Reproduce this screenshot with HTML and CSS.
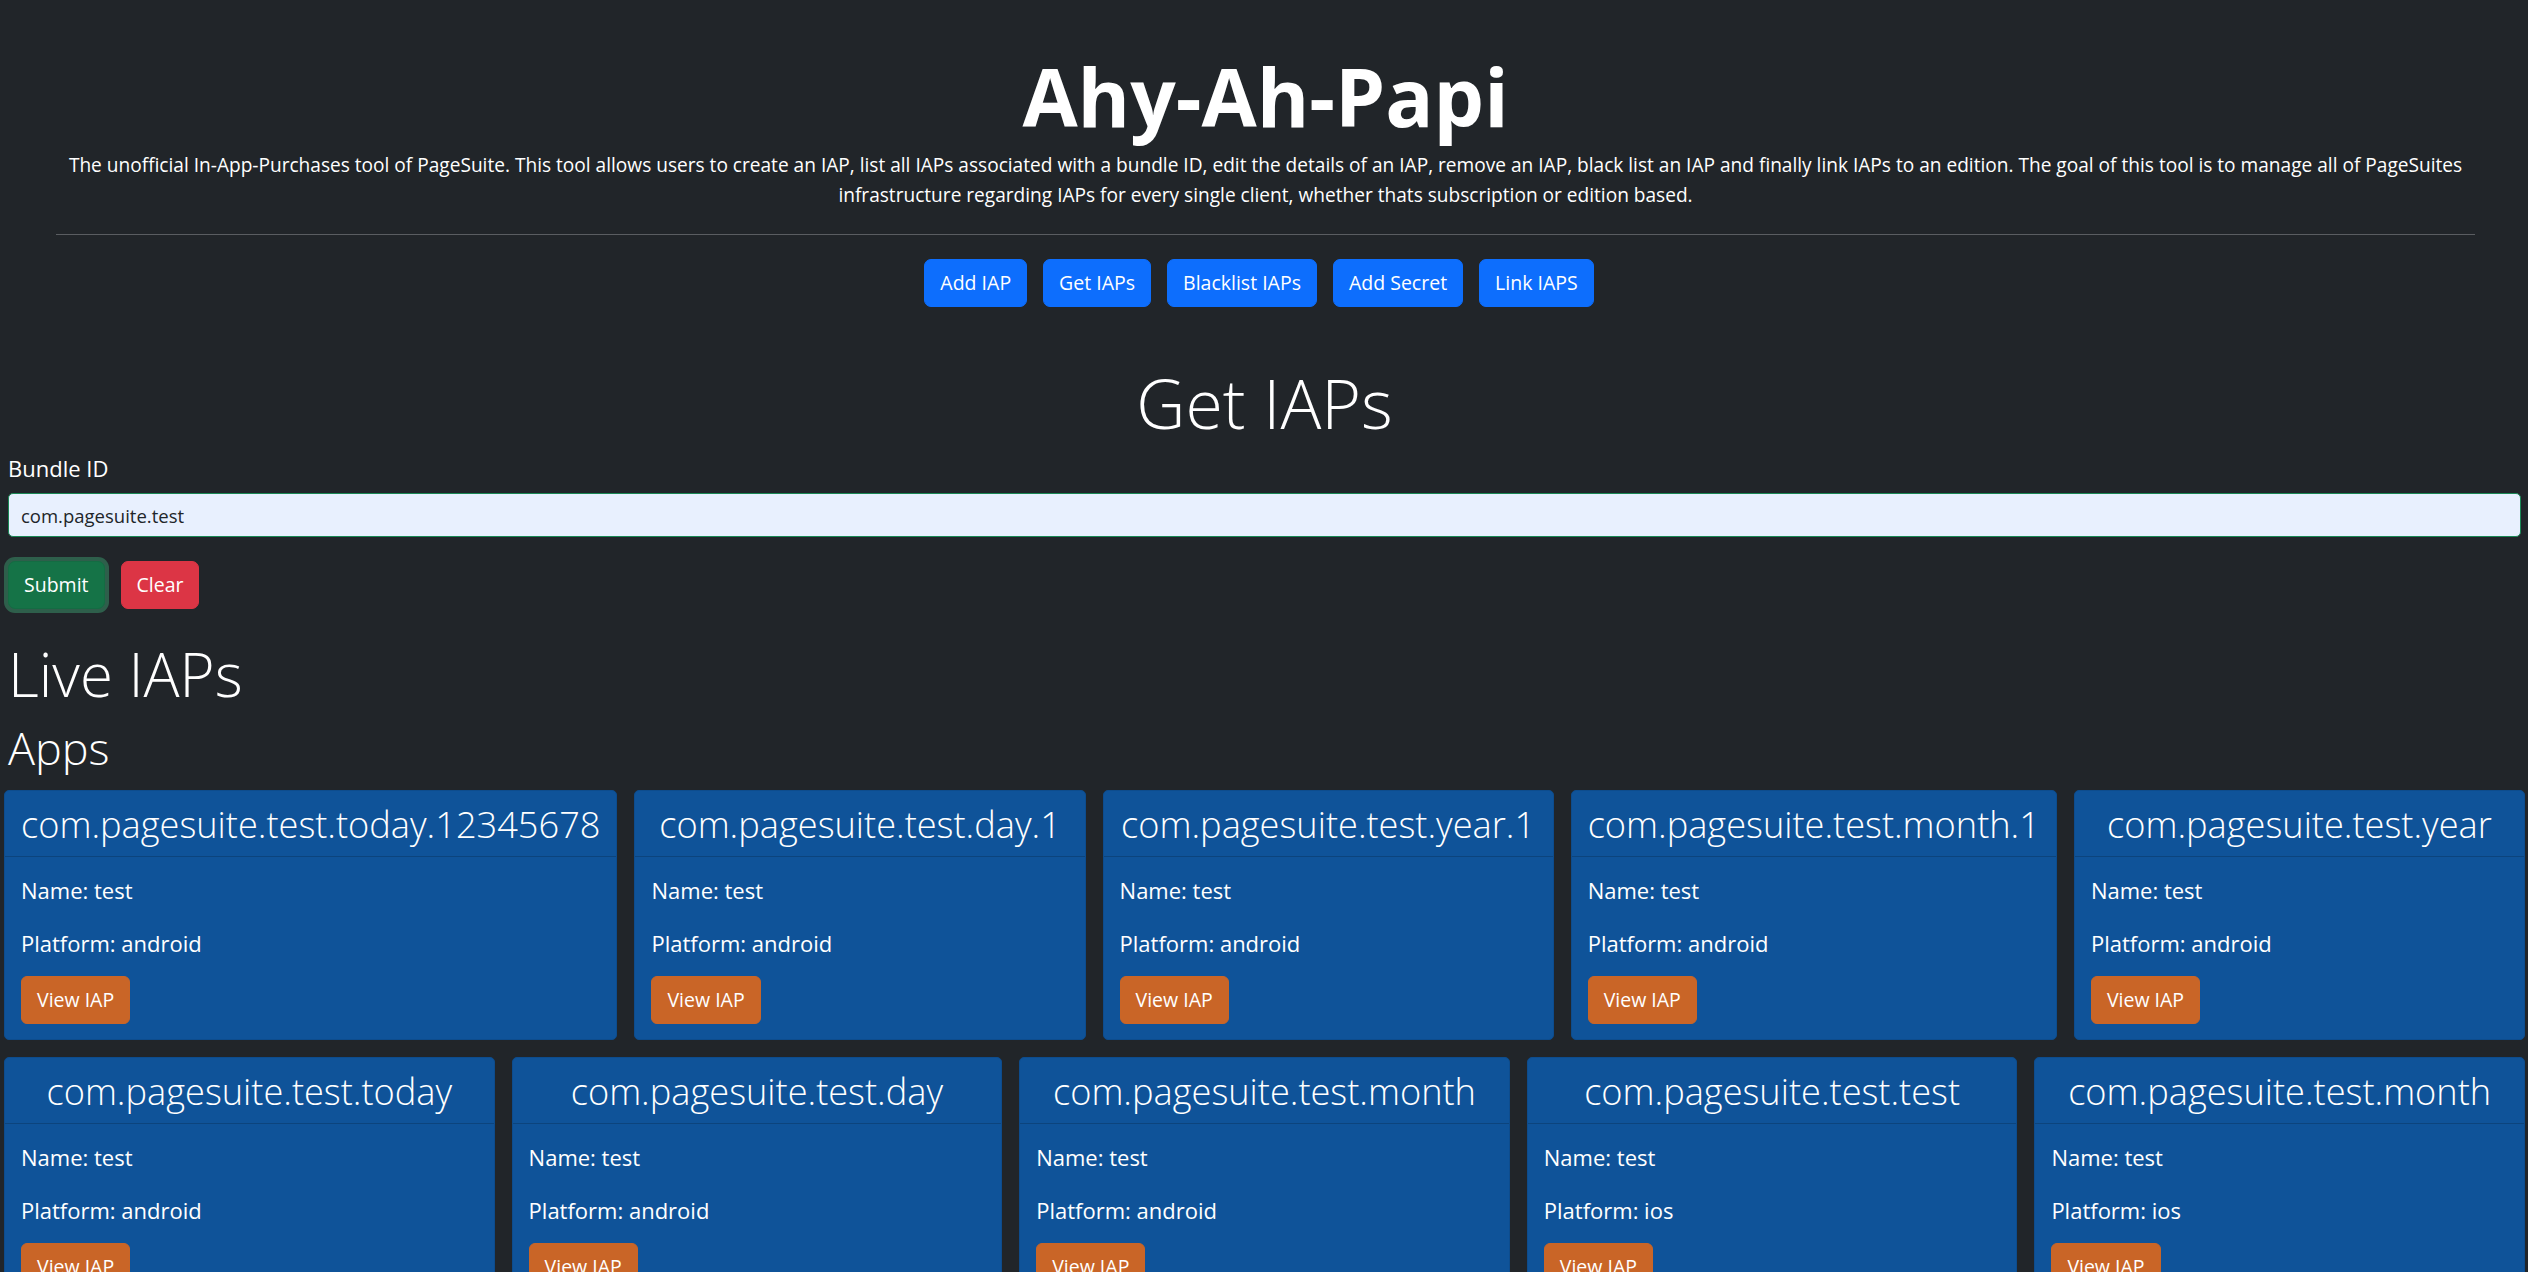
FILE: index.html
```html
<!DOCTYPE html>
<html lang="en">
<head>
<meta charset="utf-8">
<title>Ahy-Ah-Papi</title>
<link rel="stylesheet" href="styles.css">
</head>
<body>
<header class="hero">
  <h1 class="hero-title">Ahy-Ah-Papi</h1>
  <p class="hero-lead">The unofficial In-App-Purchases tool of PageSuite. This tool allows users to create an IAP, list all IAPs associated with a bundle ID, edit the details of an IAP, remove an IAP, black list an IAP and finally link IAPs to an edition. The goal of this tool is to manage all of PageSuites infrastructure regarding IAPs for every single client, whether thats subscription or edition based.</p>
  <hr class="hero-rule">
  <nav class="hero-nav">
    <button class="btn btn-primary" type="button">Add IAP</button>
    <button class="btn btn-primary" type="button">Get IAPs</button>
    <button class="btn btn-primary" type="button">Blacklist IAPs</button>
    <button class="btn btn-primary" type="button">Add Secret</button>
    <button class="btn btn-primary" type="button">Link IAPS</button>
  </nav>
</header>
<main class="page">
  <h2 class="section-title">Get IAPs</h2>
  <form class="bundle-form">
    <label class="form-label" for="bundle">Bundle ID</label>
    <input class="form-input" id="bundle" type="text" value="com.pagesuite.test">
    <div class="form-actions">
      <button class="btn btn-success is-focused" type="button">Submit</button>
      <button class="btn btn-danger" type="button">Clear</button>
    </div>
  </form>
  <h2 class="live-title">Live IAPs</h2>
  <h3 class="apps-title">Apps</h3>
  <div class="card-grid">
    <article class="iap-card">
      <div class="iap-card-header">com.pagesuite.test.today.12345678</div>
      <div class="iap-card-body">
        <p class="iap-line">Name: test</p>
        <p class="iap-line iap-line-last">Platform: android</p>
        <button class="btn btn-view" type="button">View IAP</button>
      </div>
    </article>
    <article class="iap-card">
      <div class="iap-card-header">com.pagesuite.test.day.1</div>
      <div class="iap-card-body">
        <p class="iap-line">Name: test</p>
        <p class="iap-line iap-line-last">Platform: android</p>
        <button class="btn btn-view" type="button">View IAP</button>
      </div>
    </article>
    <article class="iap-card">
      <div class="iap-card-header">com.pagesuite.test.year.1</div>
      <div class="iap-card-body">
        <p class="iap-line">Name: test</p>
        <p class="iap-line iap-line-last">Platform: android</p>
        <button class="btn btn-view" type="button">View IAP</button>
      </div>
    </article>
    <article class="iap-card">
      <div class="iap-card-header">com.pagesuite.test.month.1</div>
      <div class="iap-card-body">
        <p class="iap-line">Name: test</p>
        <p class="iap-line iap-line-last">Platform: android</p>
        <button class="btn btn-view" type="button">View IAP</button>
      </div>
    </article>
    <article class="iap-card">
      <div class="iap-card-header">com.pagesuite.test.year</div>
      <div class="iap-card-body">
        <p class="iap-line">Name: test</p>
        <p class="iap-line iap-line-last">Platform: android</p>
        <button class="btn btn-view" type="button">View IAP</button>
      </div>
    </article>
    <article class="iap-card">
      <div class="iap-card-header">com.pagesuite.test.today</div>
      <div class="iap-card-body">
        <p class="iap-line">Name: test</p>
        <p class="iap-line iap-line-last">Platform: android</p>
        <button class="btn btn-view" type="button">View IAP</button>
      </div>
    </article>
    <article class="iap-card">
      <div class="iap-card-header">com.pagesuite.test.day</div>
      <div class="iap-card-body">
        <p class="iap-line">Name: test</p>
        <p class="iap-line iap-line-last">Platform: android</p>
        <button class="btn btn-view" type="button">View IAP</button>
      </div>
    </article>
    <article class="iap-card">
      <div class="iap-card-header">com.pagesuite.test.month</div>
      <div class="iap-card-body">
        <p class="iap-line">Name: test</p>
        <p class="iap-line iap-line-last">Platform: android</p>
        <button class="btn btn-view" type="button">View IAP</button>
      </div>
    </article>
    <article class="iap-card">
      <div class="iap-card-header">com.pagesuite.test.test</div>
      <div class="iap-card-body">
        <p class="iap-line">Name: test</p>
        <p class="iap-line iap-line-last">Platform: ios</p>
        <button class="btn btn-view" type="button">View IAP</button>
      </div>
    </article>
    <article class="iap-card">
      <div class="iap-card-header">com.pagesuite.test.month</div>
      <div class="iap-card-body">
        <p class="iap-line">Name: test</p>
        <p class="iap-line iap-line-last">Platform: ios</p>
        <button class="btn btn-view" type="button">View IAP</button>
      </div>
    </article>
  </div>
</main>
</body>
</html>
```

FILE: styles.css
```css
* {
  box-sizing: border-box;
}

html {
  scrollbar-width: none;
}

html::-webkit-scrollbar {
  display: none;
}

body {
  margin: 0;
  background: #212529;
  color: #ffffff;
  font-family: "Open Sans", "Noto Sans", "DejaVu Sans", sans-serif;
}

/* ---------- header ---------- */
.hero {
  padding: 48px 53px 0 56px;
  text-align: center;
}

.hero-title {
  margin: 0;
  font-size: 80px;
  font-weight: 700;
  line-height: 96px;
}

.hero-lead {
  margin: 6px 0 0;
  font-size: 19.1px;
  line-height: 30px;
}

.hero-rule {
  margin: 24px 0 0;
  height: 0;
  border: 0;
  border-top: 1px solid #5a5d61;
}

.hero-nav {
  display: flex;
  justify-content: center;
  gap: 16px;
  padding-right: 13px;
  margin-top: 24px;
}

/* ---------- buttons ---------- */
.btn {
  font-family: inherit;
  font-size: 19.5px;
  line-height: 30px;
  padding: 8px 15px;
  border: 1px solid transparent;
  border-radius: 7px;
  color: #ffffff;
  cursor: pointer;
}

.btn-primary {
  background: #0d6efd;
  border-color: #0d6efd;
}

.btn-success {
  background: #157347;
  border-color: #146c43;
}

.btn-success.is-focused {
  box-shadow: 0 0 0 4px rgba(60, 153, 110, 0.5);
}

.btn-danger {
  background: #dc3545;
  border-color: #dc3545;
}

.btn-view {
  background: #c96527;
  border-color: #c96527;
  border-radius: 6px;
}

/* ---------- page ---------- */
.page {
  padding: 0 7px 0 8px;
}

.section-title {
  margin: 55px 0 0;
  text-align: center;
  font-size: 68px;
  font-weight: 300;
  line-height: 82px;
}

.bundle-form {
  display: flex;
  flex-direction: column;
  align-items: flex-start;
  margin-top: 8px;
}

.form-label {
  display: block;
  font-size: 22px;
  line-height: 33px;
}

.form-input {
  display: block;
  width: 100%;
  height: 44px;
  margin-top: 8px;
  padding: 0 12px;
  border: 1px solid #198754;
  border-radius: 5px;
  background: #e8f0fe;
  color: #212529;
  font-family: inherit;
  font-size: 18.5px;
  outline: none;
}

.form-actions {
  display: flex;
  gap: 16px;
  margin-top: 24px;
}

.live-title {
  margin: 29px 0 0;
  font-size: 60px;
  font-weight: 300;
  line-height: 72px;
}

.apps-title {
  margin: 11px 0 0;
  font-size: 45px;
  font-weight: 300;
  line-height: 54px;
}

/* ---------- cards ---------- */
.card-grid {
  display: flex;
  flex-wrap: wrap;
  gap: 17px;
  margin: 15px -4px 0;
}

.iap-card {
  flex: 1 1 0;
  background: #0f5399;
  border: 1px solid #0d4c8d;
  border-radius: 5px;
}

.iap-card-header {
  padding: 11px 16px 10px;
  border-bottom: 1px solid rgba(0, 0, 0, 0.18);
  text-align: center;
  white-space: nowrap;
  font-size: 36.2px;
  font-weight: 300;
  line-height: 44px;
}

.iap-card-body {
  padding: 17px 16px 15px;
}

.iap-line {
  margin: 0 0 20px;
  font-size: 22px;
  line-height: 33px;
}

.iap-line-last {
  margin-bottom: 16px;
}
```
